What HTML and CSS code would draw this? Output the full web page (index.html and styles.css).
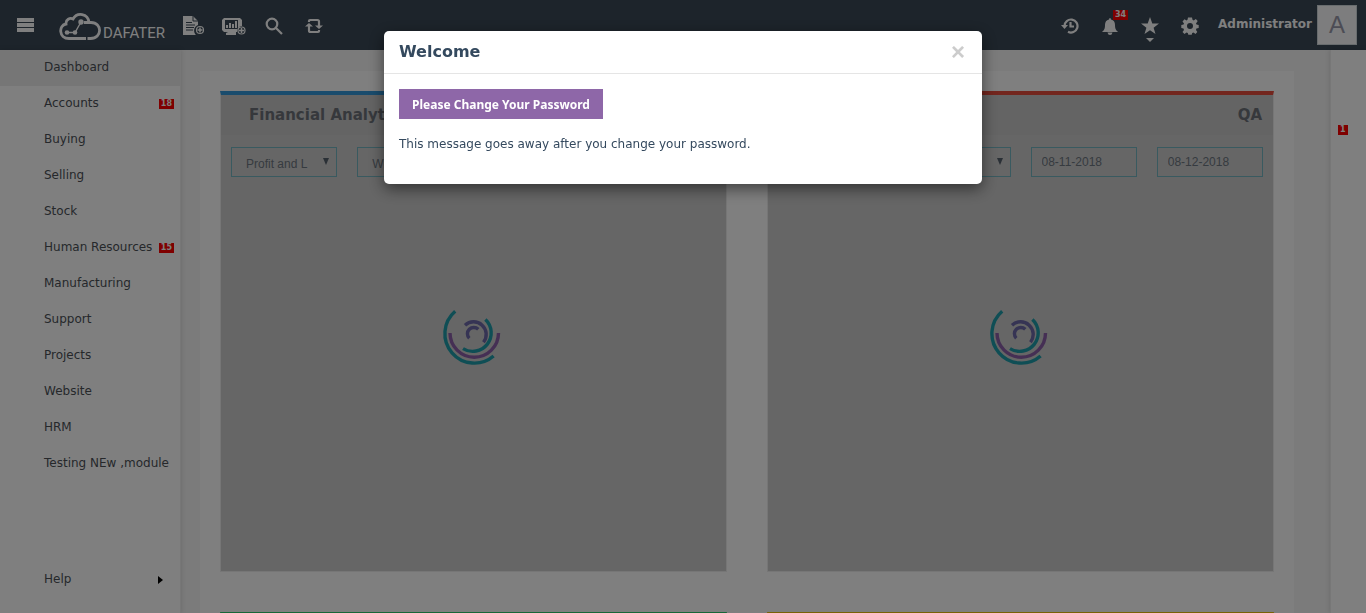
FILE: index.html
```html
<!DOCTYPE html>
<html lang="en">
<head>
<meta charset="utf-8">
<title>Dafater</title>
<link rel="stylesheet" href="styles.css">
</head>
<body>
<svg class="defs" aria-hidden="true">
  <symbol id="spinner" viewBox="-32 -32 64 64">
    <g fill="none" stroke-width="3.4">
      <path stroke="#1f9daa" d="M-18.8-22.8A29.5 29.5 0 1 0 19.6 22"/>
      <path stroke="#8a5fa8" d="M-24-1A24 24 0 0 0 24.5-1"/>
      <path stroke="#1f9daa" d="M11.4-14.6A18.5 18.5 0 0 1-11 14.6"/>
      <path stroke="#6c68a8" d="M-9-8.8A12.6 12.6 0 0 1 9.5 8.2"/>
      <path stroke="#6c68a8" d="M-4.7 4.3A6.3 6.3 0 0 1 4.3-4.7"/>
    </g>
  </symbol>
</svg>
<header class="topbar">
  <button class="icon-btn menu" aria-label="Menu"><svg width="17" height="15" viewBox="0 0 17 15"><path d="M0 0h17v4H0zM0 5h17v4H0zM0 10h17v4H0z"/></svg></button>
  <a class="brand" href="#" aria-label="Dafater">
    <svg width="42" height="28" viewBox="0 0 42 28"><g fill="none" stroke="#fff" stroke-width="2.8"><path d="M27 25.5H10C-.5 25.5-.5 12 7 11C6.500 6.500 11 4.500 14 6C18-1 29 0 30 9.500"/><path d="M25 9.500H32C43.500 9.500 43.500 25.500 31.500 25.500H28.500"/><path stroke-width="1.400" d="M8 19.500h8L22 9"/></g><g fill="#fff"><circle cx="8" cy="19.500" r="2.300"/><circle cx="16" cy="19.500" r="2.300"/><circle cx="22" cy="9" r="2.700"/></g></svg>
    <span>DAFATER</span>
  </a>
  <nav class="tools">
    <button class="icon-btn" aria-label="New document"><svg width="22" height="20" viewBox="0 0 22 20"><path d="M0 0h10l5 5v4a6 6 0 0 0-2 10H0z"/><path class="ink" d="M10 0v5h5M3 6.500h6M3 9h9M3 11.500h8M3 14h7"/><circle class="ring" cx="17" cy="14" r="3.500"/><path class="line" d="M14.500 14h5M17 11.500v5"/></svg></button>
    <button class="icon-btn" aria-label="New report"><svg width="24" height="19" viewBox="0 0 24 19"><path fill-rule="evenodd" d="M2 1h16l2 2v6a5.500 5.500 0 0 0-5 6H2l-2-2V3zM3 3v9h13V3z"/><path d="M4 11V8h2v3zM7 11V6h2v5zM10 11V7h2v4zM13 11V4h2v7zM6 15h8v3H4v-2z"/><circle class="ring" cx="19.500" cy="13.500" r="3.500"/><path class="line" d="M17 13.500h5M19.500 11v5"/></svg></button>
    <button class="icon-btn" aria-label="Search"><svg width="18" height="18" viewBox="0 0 18 18"><circle class="stroke" cx="7" cy="7" r="5.300"/><path class="stroke" d="M11 11l6 6"/></svg></button>
    <button class="icon-btn" aria-label="Refresh"><svg width="18" height="16" viewBox="0 0 18 16"><path class="stroke" d="M4 4V3q0-1 1-1h7.500Q14 2 14 3.500V8M4 7v5.500Q4 14 5.500 14H13q1 0 1-1v-1"/><path d="M0 8.500 4 5l4 3.500zM10 7.500h8L14 11z"/></svg></button>
  </nav>
  <nav class="user-tools">
    <button class="icon-btn" aria-label="History"><svg width="18" height="16" viewBox="0 0 18 16"><path class="stroke" d="M3.500 8A6.500 6.500 0 1 1 7 13.800M9.500 4v4.500H13"/><path d="M0 7h7L3.500 11z"/></svg></button>
    <button class="icon-btn bell" aria-label="Notifications"><svg width="18" height="17" viewBox="0 0 18 17"><path d="M9 0q1 0 1 1.500 4 .8 4 5.500c0 4 1 5 3 7H1c2-2 3-3 3-7Q4 2.300 8 1.500 8 0 9 0zM6.500 14.500h5q-.5 2.500-2.500 2.500t-2.500-2.500z"/></svg><span class="badge">34</span></button>
    <button class="icon-btn star" aria-label="Bookmarks"><svg width="18" height="26" viewBox="0 0 18 26"><path d="m9 0 2.300 6.500H18l-5.400 4.200L14.500 17 9 13.200 3.500 17l1.900-6.300L0 6.500h6.700zM5 21h8l-4 4z"/></svg></button>
    <button class="icon-btn" aria-label="Settings"><svg width="18" height="18" viewBox="-9 -9 18 18"><path fill-rule="evenodd" d="M-2-8.500h4l.5 2.300 1.300.6 2-1.300L7.700-5 6-2.500l.5 1L8.700-1v3l-2.300.5L6 4l1.300 2L5.500 8l-2-1.500-1.300.5L1.700 8.700h-3.400L-2.200 7l-1.300-.5L-5.500 8-7.500 6-6 4l-.5-1.500L-8.700 2v-3l2.300-.5.4-1-1.500-2L-5.500-6.800l2 1.200 1-.6zM0-3a3 3 0 1 0 0 6 3 3 0 0 0 0-6z"/></svg></button>
    <a class="user" href="#">Administrator</a>
    <span class="avatar">A</span>
  </nav>
</header>
<div class="shell">
  <aside class="sidebar">
    <nav>
      <a class="active" href="#">Dashboard</a>
      <a href="#">Accounts<span class="badge">18</span></a>
      <a href="#">Buying</a>
      <a href="#">Selling</a>
      <a href="#">Stock</a>
      <a href="#">Human Resources<span class="badge">15</span></a>
      <a href="#">Manufacturing</a>
      <a href="#">Support</a>
      <a href="#">Projects</a>
      <a href="#">Website</a>
      <a href="#">HRM</a>
      <a href="#">Testing NEw ,module</a>
    </nav>
    <a class="help" href="#">Help<svg width="5" height="8" viewBox="0 0 5 8"><path d="M0 0l5 4-5 4z"/></svg></a>
  </aside>
  <main>
    <div class="board">
      <section class="card blue">
        <h2>Financial Analytics</h2>
        <div class="filters">
          <select aria-label="Report"><option>Profit and L</option></select>
          <select aria-label="Company"><option>Wind P</option></select>
          <input aria-label="From date" value="08-11-2018">
          <input aria-label="To date" value="08-12-2018">
        </div>
        <div class="loading"><svg width="64" height="64"><use href="#spinner"/></svg></div>
      </section>
      <section class="card red">
        <h2 class="end">QA</h2>
        <div class="filters">
          <select aria-label="Report"><option>Quality</option></select>
          <select aria-label="Company"><option>Wind P</option></select>
          <input aria-label="From date" value="08-11-2018">
          <input aria-label="To date" value="08-12-2018">
        </div>
        <div class="loading"><svg width="64" height="64"><use href="#spinner"/></svg></div>
      </section>
      <section class="card green"></section>
      <section class="card yellow"></section>
    </div>
  </main>
  <aside class="rail"><span class="badge">1</span></aside>
</div>
<div class="backdrop">
  <div class="modal" role="dialog" aria-labelledby="modal-title">
    <div class="modal-head"><h1 id="modal-title">Welcome</h1><button class="close" aria-label="Close">×</button></div>
    <div class="modal-body">
      <button class="primary">Please Change Your Password</button>
      <p>This message goes away after you change your password.</p>
    </div>
  </div>
</div>
</body>
</html>
```

FILE: styles.css
```css
* { box-sizing: border-box; }
body {
  margin: 0;
  height: 100vh;
  display: flex;
  flex-direction: column;
  overflow: hidden;
  font-family: Verdana, "DejaVu Sans", sans-serif;
  font-size: 12px;
  color: #4c5157;
  background: #f6f6f6;
}
a { color: inherit; text-decoration: none; }
button { font-family: inherit; border: 0; cursor: pointer; }
.defs { position: absolute; width: 0; height: 0; }

.topbar {
  flex: none;
  display: flex;
  align-items: center;
  height: 50px;
  padding: 0 9px 0 17px;
  background: #3a4856;
  color: #fff;
}
.icon-btn {
  position: relative;
  display: flex;
  align-items: center;
  justify-content: center;
  width: 40px;
  height: 50px;
  padding: 2px 0 0;
  background: none;
}
.icon-btn svg, .brand svg { display: block; fill: #fff; }
.icon-btn .stroke { fill: none; stroke: #fff; stroke-width: 2.2; }
.icon-btn .line { fill: none; stroke: #fff; stroke-width: 1.5; }
.icon-btn .ring { fill: #3a4856; stroke: #fff; stroke-width: 1.2; }
.icon-btn .ink { fill: none; stroke: #3a4856; stroke-width: 1; }
.icon-btn.menu { width: 17px; margin-right: 25px; padding: 0; }
.brand { display: flex; align-items: flex-end; gap: 2px; padding-top: 4px; }
.brand span { font: 15px/15px Roboto, sans-serif; }
.tools { display: flex; margin-left: 9px; }
.user-tools { display: flex; margin-left: auto; }
.star svg { margin-top: 8px; }
.user { padding: 0 5px 0 8px; font-weight: bold; line-height: 48px; }
.avatar {
  align-self: center;
  width: 40px;
  height: 40px;
  border: 1px solid #d1d8dd;
  background: #fafbfc;
  color: #99a;
  font: 24px/38px "Liberation Sans", sans-serif;
  text-align: center;
}
.badge {
  padding: 0 2px;
  background: #f00;
  color: #fff;
  font-size: 8px;
  font-weight: bold;
  line-height: 10px;
}
.bell .badge { position: absolute; top: 10px; left: 23px; }

.shell { flex: 1; display: flex; min-height: 0; }
.sidebar {
  flex: none;
  display: flex;
  flex-direction: column;
  justify-content: space-between;
  width: 181px;
  padding-bottom: 15px;
  background: #fff;
  border-right: 1px solid #eee;
  box-shadow: 0 0 5px rgba(0, 0, 0, .15);
}
.sidebar a {
  display: flex;
  align-items: center;
  justify-content: space-between;
  height: 36px;
  padding: 0 6px 2px 44px;
}
.sidebar .active { background: #ededed; }
.sidebar .badge { margin-top: 2px; }
.sidebar .help { padding-right: 17px; }
.help svg { margin-top: 2px; }

main { flex: 1; min-width: 0; overflow: hidden; padding: 21px 36px 0 19px; }
.board {
  display: grid;
  grid-template-columns: 1fr 1fr;
  gap: 40px;
  padding: 20px;
  background: #fff;
}
.card {
  position: relative;
  min-height: 481px;
  border: 1px solid #ececec;
  border-top-width: 4px;
  background: #ccc;
}
.blue { border-top-color: #3498db; }
.red { border-top-color: #e74c3c; }
.green { border-top-color: #2ecc71; }
.yellow { border-top-color: #f1c40f; }
.card h2 {
  margin: 0;
  padding: 0 11px 0 28px;
  background: #c8c8c8;
  color: #6c7178;
  font-size: 15px;
  line-height: 40px;
}
.card .end { text-align: right; }
.filters {
  display: grid;
  grid-template-columns: repeat(4, 1fr);
  gap: 20px;
  padding: 12px 10px;
}
.filters input, .filters select {
  min-width: 0;
  width: 100%;
  height: 30px;
  padding: 0 10px;
  border: 1px solid #73b4c0;
  border-radius: 0;
  background: transparent;
  color: #6c7680;
  font: 12px "Liberation Sans", sans-serif;
}
.filters select {
  appearance: none;
  padding: 4px 28px 0 14px;
  background: no-repeat right 6px center / 8px 8px url("data:image/svg+xml,%3Csvg xmlns='http://www.w3.org/2000/svg' viewBox='0 0 8 8'%3E%3Cpath fill='%2355606c' d='M1 0h6L4 7z'/%3E%3C/svg%3E");
}
.loading {
  position: absolute;
  inset: 0;
  display: flex;
  align-items: center;
  justify-content: center;
  padding-top: 2px;
}
.rail {
  flex: none;
  width: 36px;
  padding: 75px 7px;
  background: #fff;
  border-left: 1px solid #eee;
  box-shadow: 0 0 5px rgba(0, 0, 0, .15);
}
.rail .badge { display: block; width: 10px; }

.backdrop {
  position: fixed;
  inset: 0;
  padding: 31px 16px;
  background: rgba(0, 0, 0, .5);
}
.modal {
  max-width: 598px;
  margin: 0 auto;
  border-radius: 5px;
  background: #fff;
  box-shadow: 0 5px 15px rgba(0, 0, 0, .5);
  color: #34495e;
}
.modal-head {
  display: flex;
  align-items: center;
  justify-content: space-between;
  height: 43px;
  padding: 0 15px;
  border-bottom: 1px solid #e5e5e5;
}
.modal h1 { margin: 0; font-size: 16px; line-height: 24px; }
.close {
  padding: 0 2px;
  background: none;
  color: #ccc;
  font: bold 24px/24px "Liberation Sans", sans-serif;
}
.modal-body { padding: 15px 15px 31px; }
.primary {
  height: 30px;
  padding: 0 13px;
  background: #8e67a8;
  color: #fff;
  font: bold 12px "Noto Sans", sans-serif;
}
.modal p { margin: 16px 0 0; line-height: 18px; }
```
